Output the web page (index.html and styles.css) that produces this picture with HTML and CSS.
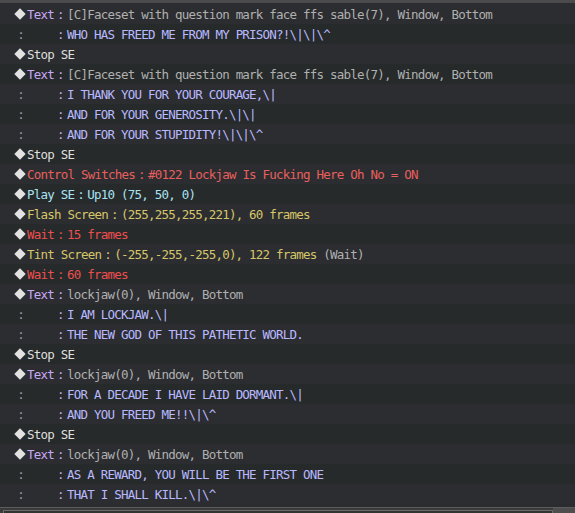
FILE: index.html
```html
<!DOCTYPE html>
<html lang="en">
<head>
    <meta charset="UTF-8">
    <title>Event Commands</title>
    <link rel="stylesheet" href="styles.css">
</head>
<body>
    <div class="editor">
        <div class="list">
            <div class="row"><span class="dia"></span><span class="lbl c-text">Text</span><span class="sep c-text">:</span><span class="arg">[C]Faceset with question mark face ffs sable(7), Window, Bottom</span></div>
            <div class="row"><span class="cont">:</span><span class="pad">    </span><span class="sep c-text">:</span><span class="msg">WHO HAS FREED ME FROM MY PRISON?!\|\|\^</span></div>
            <div class="row"><span class="dia"></span><span class="lbl c-plain">Stop SE</span></div>
            <div class="row"><span class="dia"></span><span class="lbl c-text">Text</span><span class="sep c-text">:</span><span class="arg">[C]Faceset with question mark face ffs sable(7), Window, Bottom</span></div>
            <div class="row"><span class="cont">:</span><span class="pad">    </span><span class="sep c-text">:</span><span class="msg">I THANK YOU FOR YOUR COURAGE,\|</span></div>
            <div class="row"><span class="cont">:</span><span class="pad">    </span><span class="sep c-text">:</span><span class="msg">AND FOR YOUR GENEROSITY.\|\|</span></div>
            <div class="row"><span class="cont">:</span><span class="pad">    </span><span class="sep c-text">:</span><span class="msg">AND FOR YOUR STUPIDITY!\|\|\^</span></div>
            <div class="row"><span class="dia"></span><span class="lbl c-plain">Stop SE</span></div>
            <div class="row"><span class="dia"></span><span class="lbl c-switch">Control Switches</span><span class="sep c-switch">:</span><span class="c-switch">#0122 Lockjaw Is Fucking Here Oh No = ON</span></div>
            <div class="row"><span class="dia"></span><span class="lbl c-audio">Play SE</span><span class="sep c-audio">:</span><span class="c-audio">Up10 (75, 50, 0)</span></div>
            <div class="row"><span class="dia"></span><span class="lbl c-screen">Flash Screen</span><span class="sep c-screen">:</span><span class="c-screen">(255,255,255,221), 60 frames</span></div>
            <div class="row"><span class="dia"></span><span class="lbl c-wait">Wait</span><span class="sep c-wait">:</span><span class="c-wait">15 frames</span></div>
            <div class="row"><span class="dia"></span><span class="lbl c-screen">Tint Screen</span><span class="sep c-screen">:</span><span class="c-screen">(-255,-255,-255,0), 122 frames</span><span class="arg"> (Wait)</span></div>
            <div class="row"><span class="dia"></span><span class="lbl c-wait">Wait</span><span class="sep c-wait">:</span><span class="c-wait">60 frames</span></div>
            <div class="row"><span class="dia"></span><span class="lbl c-text">Text</span><span class="sep c-text">:</span><span class="arg">lockjaw(0), Window, Bottom</span></div>
            <div class="row"><span class="cont">:</span><span class="pad">    </span><span class="sep c-text">:</span><span class="msg">I AM LOCKJAW.\|</span></div>
            <div class="row"><span class="cont">:</span><span class="pad">    </span><span class="sep c-text">:</span><span class="msg">THE NEW GOD OF THIS PATHETIC WORLD.</span></div>
            <div class="row"><span class="dia"></span><span class="lbl c-plain">Stop SE</span></div>
            <div class="row"><span class="dia"></span><span class="lbl c-text">Text</span><span class="sep c-text">:</span><span class="arg">lockjaw(0), Window, Bottom</span></div>
            <div class="row"><span class="cont">:</span><span class="pad">    </span><span class="sep c-text">:</span><span class="msg">FOR A DECADE I HAVE LAID DORMANT.\|</span></div>
            <div class="row"><span class="cont">:</span><span class="pad">    </span><span class="sep c-text">:</span><span class="msg">AND YOU FREED ME!!\|\^</span></div>
            <div class="row"><span class="dia"></span><span class="lbl c-plain">Stop SE</span></div>
            <div class="row"><span class="dia"></span><span class="lbl c-text">Text</span><span class="sep c-text">:</span><span class="arg">lockjaw(0), Window, Bottom</span></div>
            <div class="row"><span class="cont">:</span><span class="pad">    </span><span class="sep c-text">:</span><span class="msg">AS A REWARD, YOU WILL BE THE FIRST ONE</span></div>
            <div class="row"><span class="cont">:</span><span class="pad">    </span><span class="sep c-text">:</span><span class="msg">THAT I SHALL KILL.\|\^</span></div>
        </div>
        <div class="hscroll">
            <div class="track"></div>
            <div class="corner"></div>
        </div>
    </div>
</body>
</html>
```

FILE: styles.css
```css
body {
    margin: 0;
    padding: 0;
    background-color: #2b2c2f;
    font-family: "DejaVu Sans Mono", monospace;
    font-size: 12.5px;
    letter-spacing: -0.78px;
    overflow: hidden;
}

.editor {
    width: 575px;
    height: 513px;
    border-top: 3px solid #4b4b4d;
    box-sizing: border-box;
    display: flex;
    flex-direction: column;
}

.list {
    padding-top: 1px;
    height: 503px;
}

.row {
    height: 20px;
    line-height: 22px;
    overflow: hidden;
    padding-left: 14px;
    white-space: pre;
    color: #b4b4b4;
    background-color: #2c2d30;
}

.row:nth-child(even) {
    background-color: #262a2a;
}

/* the diamond in front of each command */
.dia {
    display: inline-block;
    width: 13px;
    height: 20px;
    vertical-align: top;
    position: relative;
}

.dia::before {
    content: "";
    position: absolute;
    left: 2px;
    top: 6px;
    width: 8px;
    height: 8px;
    background-color: #e2e2e2;
    transform: rotate(45deg);
}

.sep,
.cont {
    display: inline-block;
    width: 13px;
    text-align: center;
}

.cont {
    color: #9a9ab4;
}

.arg {
    color: #b0b0b0;
}

.msg {
    color: #b9b9ff;
}

.c-text { color: #c8a9f6; }
.c-plain { color: #dedede; }
.c-switch { color: #e8605e; }
.c-audio { color: #a9e2f2; }
.c-screen { color: #d6c66a; }
.c-wait { color: #ec4f4f; }

.hscroll {
    flex: 1;
    display: flex;
    border-top: 1px solid #5c5c5c;
    background-color: #3a3a3a;
}

.track {
    flex: 1;
    margin: 2px 0 0 3px;
    border: 1px solid #6a6a6a;
    border-bottom: none;
    background-color: #323232;
}

.corner {
    width: 22px;
    background-color: #4e4e4e;
}
```
